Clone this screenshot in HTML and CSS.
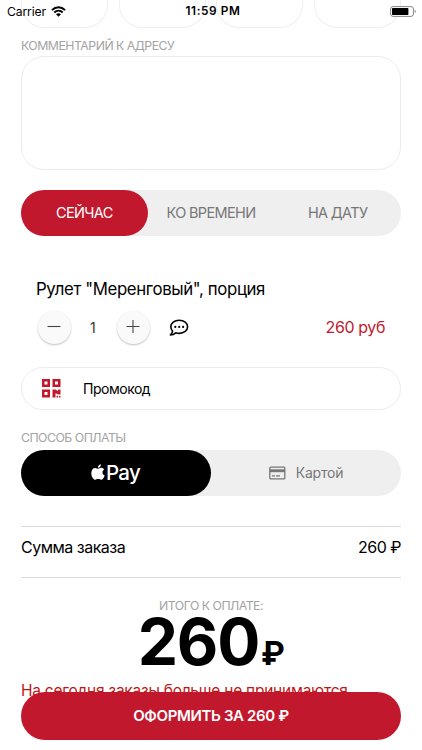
FILE: index.html
```html
<!DOCTYPE html>
<html lang="ru">
<head>
<meta charset="utf-8">
<meta name="viewport" content="width=device-width, initial-scale=1">
<title>Оформление заказа</title>
<link rel="stylesheet" href="styles.css">
</head>
<body>
<header class="status">
  <div class="status-left"><span class="carrier">Carrier</span>
    <svg class="wifi" width="15" height="11" viewBox="0 0 15 11"><g fill="none" stroke="#000" stroke-width="1.9"><path d="M.9 4.1C4.7.3 10.3.3 14.1 4.1"/><path d="M3.3 6.5c2.5-2.4 5.9-2.4 8.4 0"/></g><path d="M5 8.2c1.5-1.4 3.5-1.4 5 0L7.5 10.8z"/></svg>
  </div>
  <span class="clock">11:59 PM</span>
  <svg class="battery" width="27" height="11" viewBox="0 0 27 11"><rect x=".6" y=".6" width="22.8" height="9.8" rx="2.4" fill="#fff" stroke="#858585"/><rect x="2" y="2" width="16.4" height="7" rx=".8"/><path d="M24.7 3.6c1.6.6 1.6 3.2 0 3.8z" fill="#999"/></svg>
</header>
<main class="page">
  <div class="tiles"><i></i><i></i><i></i><i></i></div>
  <div class="label"><span>КОММЕНТАРИЙ К АДРЕСУ</span></div>
  <div class="comment"></div>
  <div class="segments times">
    <div class="segment red"><span>СЕЙЧАС</span></div>
    <div class="segment"><span>КО ВРЕМЕНИ</span></div>
    <div class="segment"><span>НА ДАТУ</span></div>
  </div>
  <section class="product">
    <div class="product-name"><span>Рулет "Меренговый", порция</span></div>
    <div class="product-row">
      <div class="round"><svg width="14" height="14" viewBox="0 0 14 14"><path d="M.5 6.500h13" stroke="#444" stroke-width="1.100"/></svg></div>
      <span class="qty">1</span>
      <div class="round"><svg width="14" height="14" viewBox="0 0 14 14"><path d="M.5 6.500h13M7 0v13" stroke="#444" stroke-width="1.100"/></svg></div>
      <svg class="bubble" width="20" height="18" viewBox="0 0 20 18"><path d="M10.200 1.200c4.800 0 8.400 2.900 8.400 6.600s-3.600 6.600-8.400 6.600c-1.300 0-2.500-.2-3.500-.6-1.400 1.300-3.200 2.100-5.300 2.200 1.200-1.300 2-2.500 2.200-3.900-1.200-1.200-1.800-2.700-1.800-4.300 0-3.700 3.700-6.600 8.400-6.600z" fill="none" stroke="#000" stroke-width="1.600" stroke-linejoin="round"/><circle cx="6.300" cy="7.900" r="1.100"/><circle cx="10.200" cy="7.900" r="1.100"/><circle cx="14.100" cy="7.900" r="1.100"/></svg>
      <span class="price">260 руб</span>
    </div>
  </section>
  <div class="promo">
    <svg width="19" height="19" viewBox="0 0 19 19" fill="#c1182e"><path fill-rule="evenodd" d="M0 0h8v8H0zM2.500 2.500v3h3v-3zM10.500 0h8v8h-8zM13 2.500v3h3v-3zM0 10.500h8v8H0zM2.500 13v3h3v-3z"/><path d="M10.500 10.500h3l2.500 1.500v-1.500h2.500v5h-2l-3-1.300v4.300h-3zM14.500 16.800h1.500v1.700h-1.500zM17 17h1.500v1.500H17z"/></svg>
    <span>Промокод</span>
  </div>
  <div class="label pay-label"><span>СПОСОБ ОПЛАТЫ</span></div>
  <div class="segments">
    <div class="segment black">
      <svg width="14" height="17" viewBox="0 0 14 17" fill="#fff"><path d="M9.900.2c.2 1.900-1.300 3.700-3 3.600C6.700 2.100 8.200.4 9.900.2zM7.100 4.700c.8 0 1.700-.9 3.100-.9 1.200 0 2.300.6 3 1.600-2.500 1.600-2.100 4.900.5 6-.7 2.100-2 4.400-3.500 4.400-1.100 0-1.600-.7-3-.7s-1.900.7-2.900.7C2.600 15.800.3 12.700.3 9.200c0-3.500 1.900-5.300 3.900-5.300 1.300 0 2.200.8 2.900.8z"/></svg><span class="pay-word">Pay</span>
    </div>
    <div class="segment">
      <svg width="17" height="14" viewBox="0 0 17 14"><rect x=".8" y="1.200" width="15" height="11.600" rx=".9" fill="none" stroke="#777" stroke-width="1.300"/><path d="M1 3.300h15v2.900H1z" fill="#777"/><path d="M3 9.900h3M7 9.900h4" stroke="#777" stroke-width="1.300"/></svg><span class="card-word">Картой</span>
    </div>
  </div>
  <div class="sum"><span>Сумма заказа</span><span>260 ₽</span></div>
  <div class="total-label"><span>ИТОГО К ОПЛАТЕ:</span></div>
  <div class="total"><span class="amount">260</span><span class="ruble">₽</span></div>
  <div class="warning"><span>На сегодня заказы больше не принимаются</span></div>
</main>
<div class="submit"><span>ОФОРМИТЬ ЗА 260 ₽</span></div>
</body>
</html>
```
FILE: styles.css
```css
* { box-sizing: border-box; }
body { margin: 0; width: 422px; height: 750px; overflow: hidden; position: relative; background: #fff; color: #000; font-family: Inter, "Liberation Sans", sans-serif; }
span { white-space: nowrap; }
svg { display: block; flex: none; }
.status { position: absolute; z-index: 2; top: 0; left: 0; width: 422px; height: 22px; display: grid; grid-template-columns: 1fr auto 1fr; align-items: center; padding: 0 5px 0 7px; }
.status-left { display: flex; align-items: center; gap: 5px; }
.carrier { font-size: 12.200px; letter-spacing: -.15px; }
.clock { font-size: 11.800px; font-weight: 600; letter-spacing: .6px; margin-left: 2px; }
.battery { justify-self: end; }
.page { padding: 0 21px; display: flex; flex-direction: column; }
.tiles { display: flex; gap: 10.500px; height: 27.500px; }
.tiles i { flex: 1; border: 1px solid #efefef; border-top: 0; border-radius: 0 0 23px 23px; }
.label { height: 16px; margin-top: 10px; display: flex; align-items: center; font-size: 12.300px; letter-spacing: -.51px; color: #a3a3a3; margin-bottom: 2px; }
.comment { height: 114px; border: 1px solid #ececec; border-radius: 23px; }
.segments { display: flex; height: 46px; border-radius: 23px; background: #efefef; color: #777; font-size: 14.500px; }
.times { margin-top: 20.500px; letter-spacing: -.65px; }
.times span { margin-top: -1px; }
.segment { flex: 1; border-radius: 23px; display: flex; align-items: center; justify-content: center; }
.red { background: #c1182e; color: #fff; }
.black { background: #000; color: #fff; }
.product { padding: 0 16px 0 15px; margin-top: 41px; }
.product-name { height: 24px; display: flex; align-items: center; font-size: 16.800px; letter-spacing: -.36px; }
.product-row { margin-top: 9px; height: 34px; display: flex; align-items: center; }
.round { width: 33px; height: 33px; margin-left: 1.500px; border-radius: 50%; background: #fafafa; box-shadow: 0 1px 2px rgba(0,0,0,.25); display: flex; align-items: center; justify-content: center; }
.qty { width: 44.500px; text-align: center; font-size: 14px; color: #333; }
.bubble { margin: 2px 0 0 19px; }
.price { margin-left: auto; font-size: 16px; letter-spacing: -.4px; color: #c1182e; }
.promo { margin-top: 23px; height: 43px; border: 1px solid #ececec; border-radius: 21.500px; display: flex; align-items: center; gap: 22px; padding-left: 20px; font-size: 14px; letter-spacing: -.48px; }
.pay-label { margin-top: 19px; margin-bottom: 5px; }
.black svg { margin-right: 1px; margin-top: -2px; }
.pay-word { font-size: 20.500px; font-weight: 500; letter-spacing: -.8px; margin-top: -2px; margin-right: 1px; }
.card-word { margin-left: 10px; font-size: 14px; letter-spacing: -.2px; margin-top: -1px; }
.sum { margin-top: 29.500px; height: 52px; border: solid #d9d9d9; border-width: 1px 0; display: flex; align-items: center; justify-content: space-between; font-size: 16px; letter-spacing: -.5px; padding-bottom: 9px; }
.total-label { height: 16px; margin-top: 20px; display: flex; align-items: center; justify-content: center; font-size: 12.300px; letter-spacing: -.5px; color: #a3a3a3; line-height: 14px; }
.total { height: 60px; margin-top: -2px; display: flex; align-items: baseline; justify-content: center; line-height: 60px; font-weight: 700; }
.amount { font-size: 64px; letter-spacing: -1.200px; }
.ruble { font-size: 32px; letter-spacing: -.5px; margin-left: 2px; }
.warning { height: 20px; margin-top: 9px; display: flex; align-items: center; font-size: 15.500px; letter-spacing: -.24px; color: #c21515; }
.submit { position: absolute; z-index: 3; left: 21px; top: 691.500px; width: 380px; height: 48px; border-radius: 24px; background: #c1182e; color: #fff; display: flex; align-items: center; justify-content: center; font-size: 15px; letter-spacing: -.36px; font-weight: 600; }
```
